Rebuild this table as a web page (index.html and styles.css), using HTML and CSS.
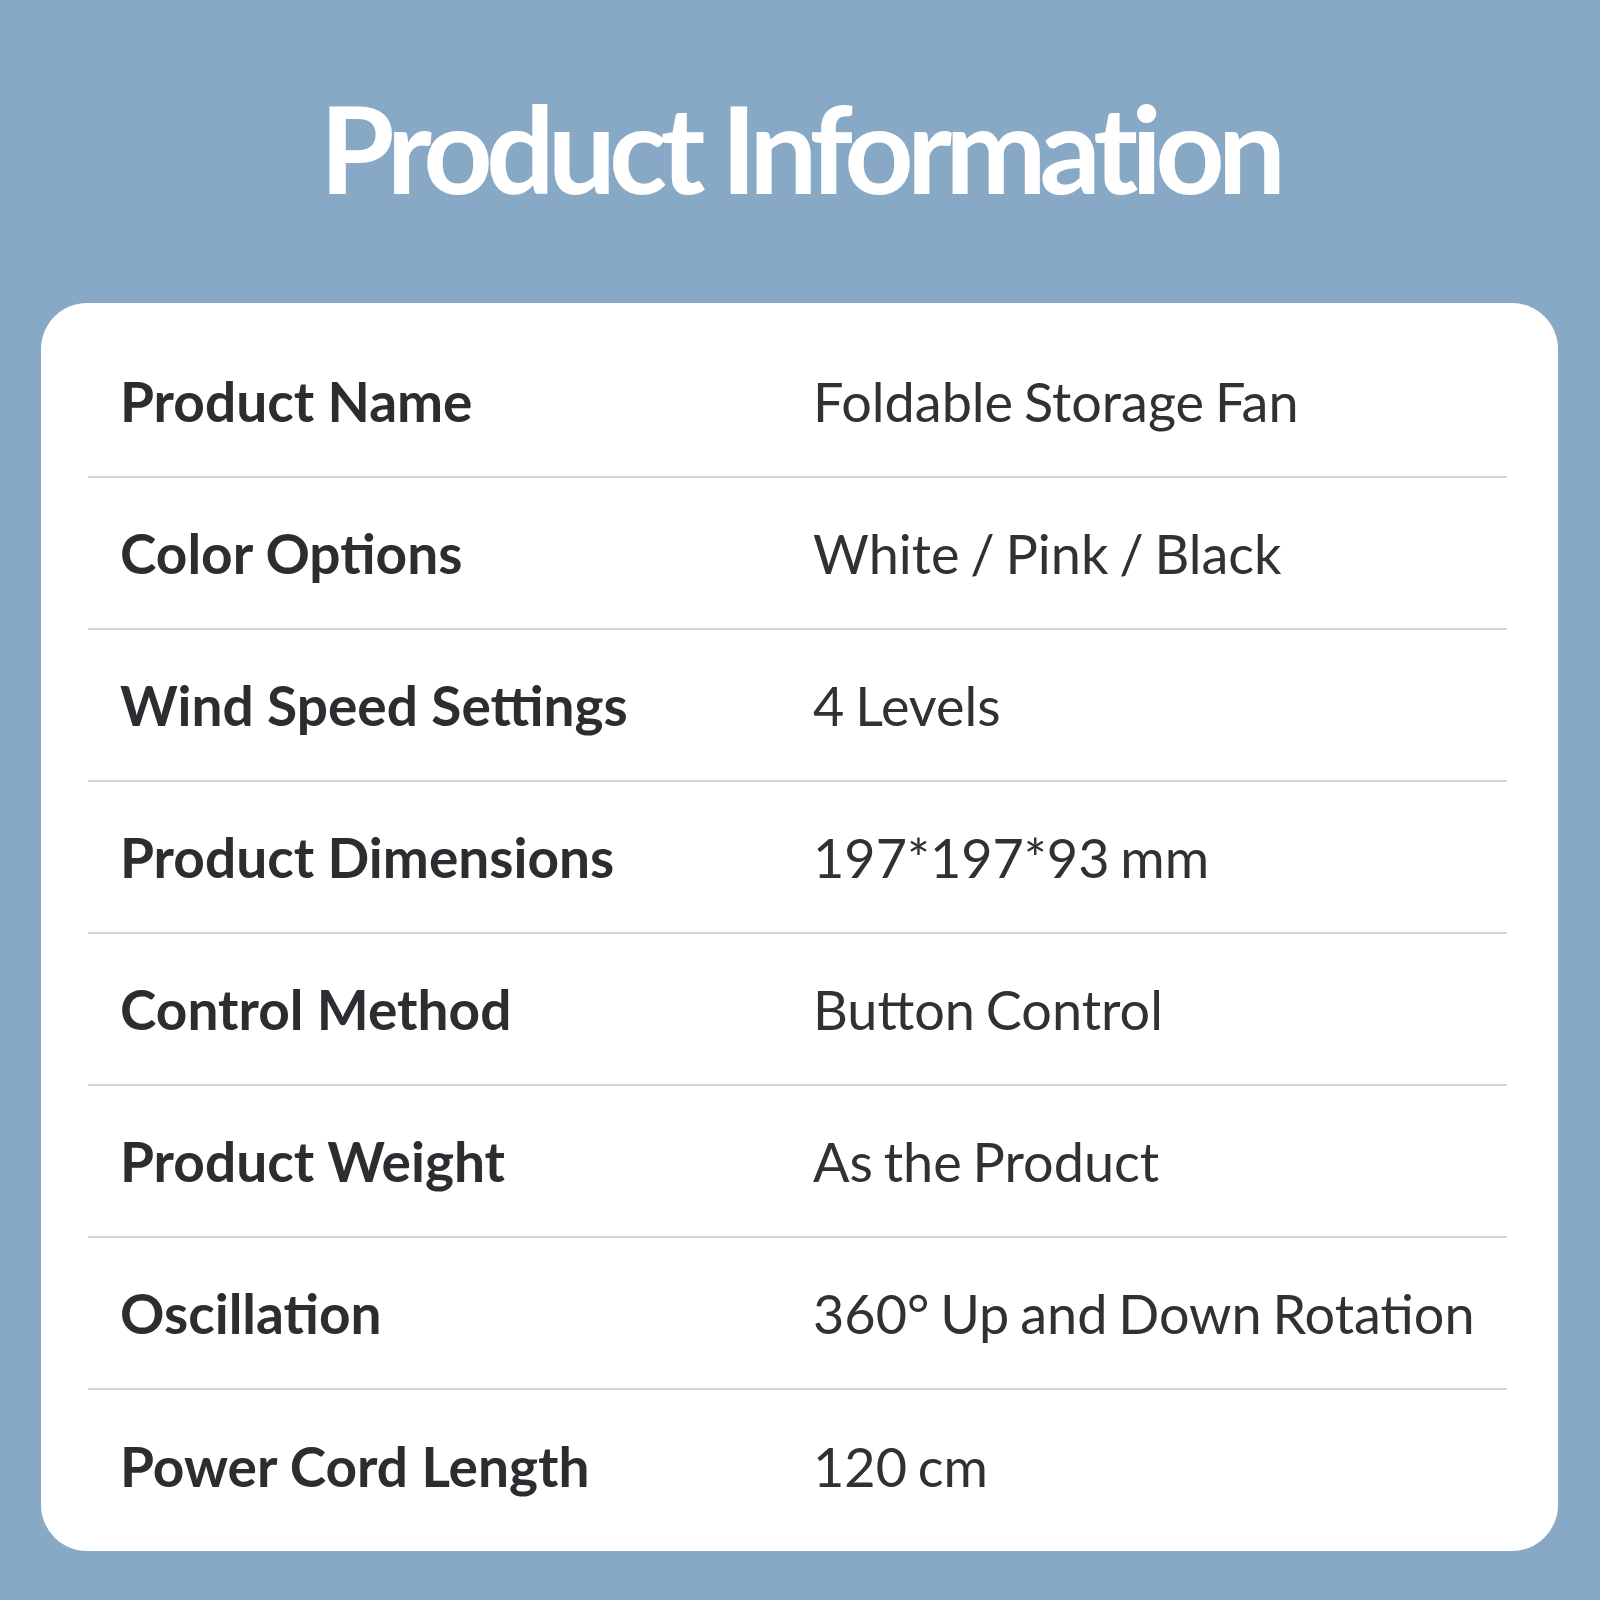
FILE: index.html
```html
<!DOCTYPE html>
<html lang="en">
<head>
<meta charset="utf-8">
<title>Product Information</title>
<link rel="stylesheet" href="styles.css">
</head>
<body>
<main class="page">
  <h1 class="title">Product Information</h1>
  <section class="card">
    <div class="row"><div class="label">Product Name</div><div class="value">Foldable Storage Fan</div></div>
    <div class="row"><div class="label">Color Options</div><div class="value">White / Pink / Black</div></div>
    <div class="row"><div class="label">Wind Speed Settings</div><div class="value">4 Levels</div></div>
    <div class="row"><div class="label">Product Dimensions</div><div class="value">197*197*93 mm</div></div>
    <div class="row"><div class="label">Control Method</div><div class="value">Button Control</div></div>
    <div class="row"><div class="label">Product Weight</div><div class="value">As the Product</div></div>
    <div class="row"><div class="label">Oscillation</div><div class="value">360° Up and Down Rotation</div></div>
    <div class="row"><div class="label">Power Cord Length</div><div class="value">120 cm</div></div>
  </section>
</main>
</body>
</html>
```
FILE: styles.css
```css
html, body {
  margin: 0;
  padding: 0;
}
body {
  width: 1600px;
  height: 1600px;
  background: #88a9c5;
  font-family: "Lato", "Open Sans", sans-serif;
  overflow: hidden;
}
.page {
  display: flex;
  flex-direction: column;
  align-items: stretch;
  padding: 0 42px 0 41px;
}
.title {
  margin: 0;
  height: 303px;
  display: flex;
  align-items: center;
  justify-content: center;
  padding-bottom: 8px;
  box-sizing: border-box;
  color: #ffffff;
  font-weight: 700;
  font-size: 121px;
  letter-spacing: -6.9px;
}
.card {
  background: #ffffff;
  border-radius: 46px;
  padding: 23px 51px 9px 47px;
  display: flex;
  flex-direction: column;
}
.row {
  height: 152px;
  display: grid;
  grid-template-columns: 725px 1fr;
  align-items: center;
  border-bottom: 2px solid #cdd6da;
  box-sizing: border-box;
}
.row:last-child {
  border-bottom: none;
}
.label {
  padding-left: 32px;
  font-weight: 700;
  font-size: 55px;
  color: #2c2d30;
}
.value {
  font-weight: 400;
  font-size: 54px;
  word-spacing: -3px;
  color: #303134;
}
```
